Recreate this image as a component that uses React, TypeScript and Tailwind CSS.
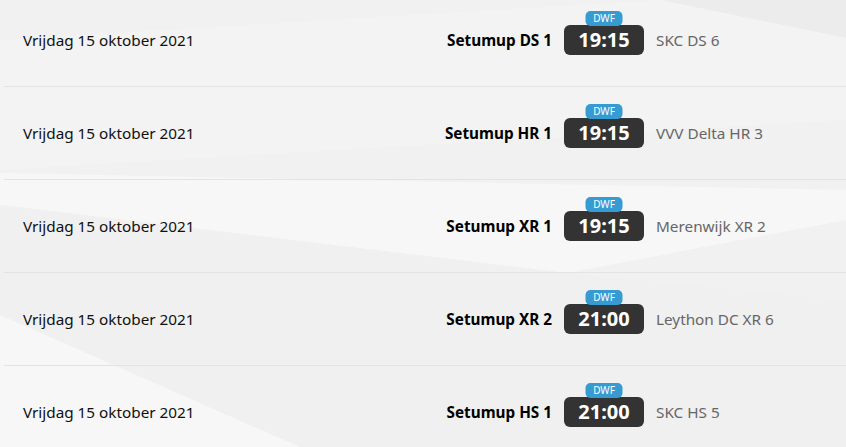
const matches = [
  { home: "Setumup DS 1", time: "19:15", away: "SKC DS 6" },
  { home: "Setumup HR 1", time: "19:15", away: "VVV Delta HR 3" },
  { home: "Setumup XR 1", time: "19:15", away: "Merenwijk XR 2" },
  { home: "Setumup XR 2", time: "21:00", away: "Leython DC XR 6" },
  { home: "Setumup HS 1", time: "21:00", away: "SKC HS 5" },
];

const Backdrop = () => (
  <svg
    className="absolute inset-0 w-full h-full"
    viewBox="0 0 846 447"
    preserveAspectRatio="none"
  >
    <rect width="846" height="447" fill="#f1f1f1" />
    <polygon points="660,0 846,0 846,38" fill="#ececec" />
    <polygon points="0,40 660,0 846,38 846,120 0,170" fill="#f3f3f3" />
    <polygon points="0,173 846,190 846,220 567,273 0,205" fill="#f7f7f7" />
    <polygon points="0,205 567,273 846,300 846,447 300,447 0,315" fill="#f0f0f0" />
    <polygon points="0,315 300,447 0,447" fill="#f7f7f7" />
  </svg>
);

const Row = ({ home, time, away }: { home: string; time: string; away: string }) => (
  <div className="flex items-center h-[93px] border-b border-[#e3e3e3]">
    <div className="w-[358px] pl-[19px] text-[15.3px] text-[#111111]">
      Vrijdag 15 oktober 2021
    </div>
    <div className="flex-1 grid grid-cols-[1fr_auto_1fr] items-center gap-x-3">
      <div className="text-right text-[15.3px] font-bold text-black">{home}</div>
      <div className="relative">
        <span className="absolute left-1/2 -translate-x-1/2 -top-[14px] h-[15px] w-[37px] rounded-[5px] bg-[#379bd3] text-white text-[10px] leading-[15px] text-center">
          DWF
        </span>
        <div className="w-[80px] h-[30px] rounded-md bg-[#333333] text-white text-[20px] font-bold leading-[30px] text-center">
          {time}
        </div>
      </div>
      <div className="text-[15.3px] text-[#666666]">{away}</div>
    </div>
  </div>
);

export default function App() {
  return (
    <div
      className="relative w-[846px] h-[447px] overflow-hidden"
      style={{ fontFamily: '"Noto Sans", "Open Sans", sans-serif' }}
    >
      <Backdrop />
      <div className="relative pl-1 -mt-[6px]">
        {matches.map((m) => (
          <Row key={m.home} {...m} />
        ))}
      </div>
    </div>
  );
}
